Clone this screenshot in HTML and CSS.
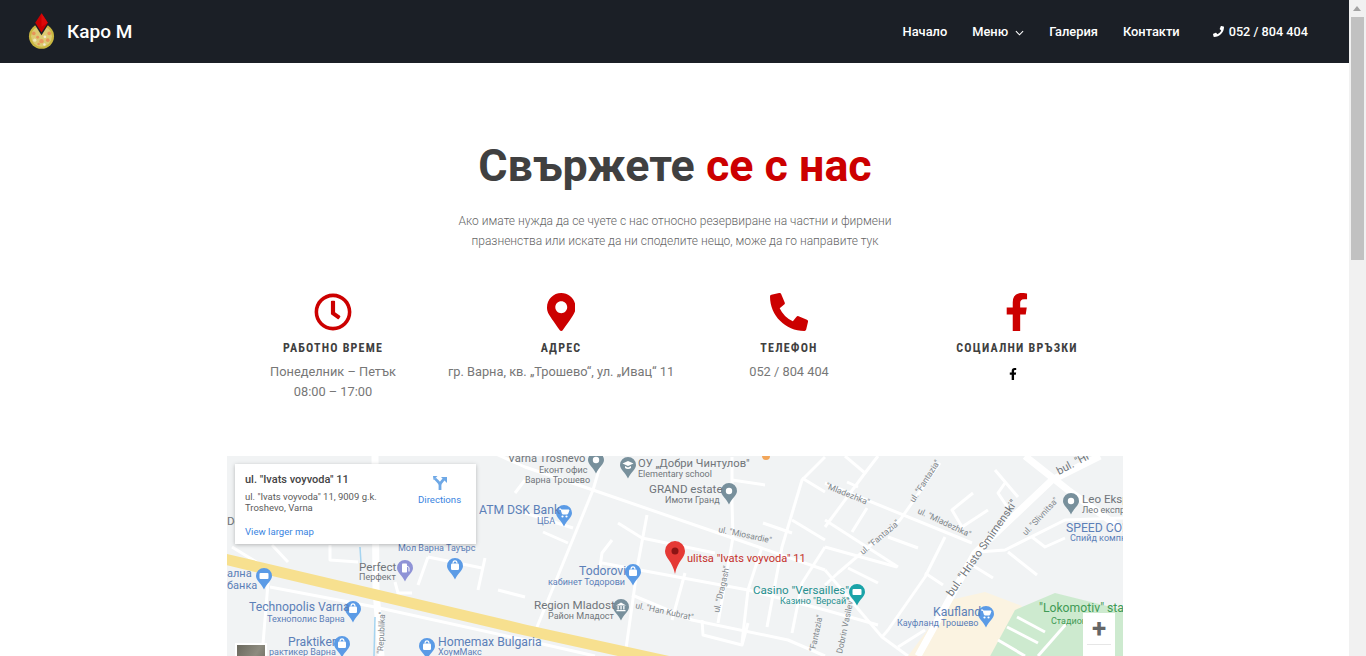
FILE: index.html
```html
<!DOCTYPE html>
<html lang="bg">
<head>
    <meta charset="UTF-8">
    <meta name="viewport" content="width=device-width, initial-scale=1.0">
    <title>Контакти - Каро М</title>
    <link rel="stylesheet" href="styles.css">
</head>
<body>
    <div class="page">
        <!-- Navigation -->
        <nav class="navbar">
            <a href="#" class="brand">
                <svg class="brand-logo" viewBox="0 0 28 38" aria-hidden="true">
                    <circle cx="14" cy="24" r="13" fill="#c9b640"/>
                    <circle cx="14" cy="24" r="10.800" fill="#dccb72"/>
                    <circle cx="6" cy="21" r="1.900" fill="#e6955a"/>
                    <circle cx="22" cy="21" r="1.900" fill="#e6955a"/>
                    <circle cx="14" cy="29" r="2.300" fill="#e8985e"/>
                    <circle cx="7" cy="28" r="1.700" fill="#f1e6b8"/>
                    <circle cx="20.500" cy="28" r="1.900" fill="#e6955a"/>
                    <circle cx="10" cy="25" r="1.500" fill="#e6955a"/>
                    <circle cx="17.500" cy="24.500" r="1.400" fill="#f3ead0"/>
                    <circle cx="11" cy="32" r="1.300" fill="#e6955a"/>
                    <circle cx="17" cy="32.500" r="1.300" fill="#f3ead0"/>
                    <path d="M14 23 L6.500 11 H21.500 Z" fill="#1b1f26"/>
                    <path d="M14 0 L20.500 10 L14 20 L7.500 10 Z" fill="#c80000"/>
                    <path d="M14 0 L20.500 10 L14 14 Z" fill="#dc0a0a"/>
                </svg>
                <span>Каро М</span>
            </a>
            <ul class="nav-links">
                <li><a href="#">Начало</a></li>
                <li>
                    <a href="#" class="has-caret">Меню
                        <svg class="caret" viewBox="0 0 10 6" aria-hidden="true"><path d="M1 1l4 4 4-4" fill="none" stroke="currentColor" stroke-width="1.200"/></svg>
                    </a>
                </li>
                <li><a href="#">Галерия</a></li>
                <li><a href="#">Контакти</a></li>
            </ul>
            <a href="#" class="nav-phone">
                <svg class="nav-phone-icon" viewBox="0 0 512 512" aria-hidden="true"><path d="M493.4 24.600l-104-24c-11.300-2.600-22.900 3.300-27.500 13.900l-48 112c-4.200 9.800-1.400 21.300 6.900 28l60.600 49.600c-36 76.700-98.900 140.500-177.200 177.200l-49.600-60.600c-6.800-8.300-18.200-11.100-28-6.900l-112 48C3.900 366.500-2 378.100.6 389.400l24 104C27.100 504.200 36.700 512 48 512c256.100 0 464-207.500 464-464 0-11.200-7.700-20.900-18.600-23.400z"/></svg>
                052 / 804 404
            </a>
        </nav>

        <!-- Main Content -->
        <main class="contact">
            <h1 class="contact-title">Свържете <span>се с нас</span></h1>
            <p class="contact-lead">Ако имате нужда да се чуете с нас относно резервиране на частни и фирмени<br>празненства или искате да ни споделите нещо, може да го направите тук</p>

            <div class="info-grid">
                <div class="info-col">
                    <svg class="info-icon" viewBox="0 0 512 512" aria-hidden="true"><path d="M256 8C119 8 8 119 8 256s111 248 248 248 248-111 248-248S393 8 256 8zm0 448c-110.500 0-200-89.500-200-200S145.500 56 256 56s200 89.500 200 200-89.500 200-200 200zm61.800-104.400l-84.900-61.700c-3.100-2.300-4.900-5.900-4.900-9.700V116c0-6.600 5.400-12 12-12h32c6.600 0 12 5.400 12 12v141.700l66.800 48.600c5.400 3.900 6.500 11.400 2.600 16.800L334.600 349c-3.900 5.300-11.400 6.500-16.800 2.600z"/></svg>
                    <h3>Работно време</h3>
                    <p>Понеделник – Петък<br>08:00 – 17:00</p>
                </div>
                <div class="info-col">
                    <svg class="info-icon" viewBox="0 0 384 512" aria-hidden="true"><path d="M172.268 501.670C26.970 291.031 0 269.413 0 192 0 85.961 85.961 0 192 0s192 85.961 192 192c0 77.413-26.970 99.031-172.268 309.670-9.535 13.774-29.930 13.773-39.464 0zM192 272c44.183 0 80-35.817 80-80s-35.817-80-80-80-80 35.817-80 80 35.817 80 80 80z"/></svg>
                    <h3>Адрес</h3>
                    <p>гр. Варна, кв. „Трошево“, ул. „Ивац“ 11</p>
                </div>
                <div class="info-col">
                    <svg class="info-icon" viewBox="0 0 512 512" aria-hidden="true"><path d="M497.390 361.800l-112-48a24 24 0 0 0-28 6.900l-49.600 60.600A370.660 370.660 0 0 1 130.600 204.110l60.600-49.600a23.940 23.940 0 0 0 6.900-28l-48-112A24.160 24.160 0 0 0 122.600.61l-104 24A24 24 0 0 0 0 48c0 256.500 207.900 464 464 464a24 24 0 0 0 23.400-18.600l24-104a24.290 24.290 0 0 0-14.010-27.600z"/></svg>
                    <h3>Телефон</h3>
                    <p>052 / 804 404</p>
                </div>
                <div class="info-col">
                    <svg class="info-icon" viewBox="0 0 320 512" aria-hidden="true"><path d="M279.140 288l14.220-92.660h-88.910v-60.130c0-25.350 12.420-50.060 52.240-50.060h40.420V6.260S260.430 0 225.360 0c-73.220 0-121.080 44.380-121.080 124.720v70.620H22.890V288h81.390v224h100.170V288z"/></svg>
                    <h3>Социални връзки</h3>
                    <a href="#" class="social-link">
                        <svg viewBox="0 0 320 512" aria-hidden="true"><path d="M279.140 288l14.220-92.660h-88.910v-60.130c0-25.350 12.420-50.060 52.240-50.060h40.420V6.260S260.430 0 225.360 0c-73.220 0-121.080 44.380-121.080 124.720v70.620H22.890V288h81.390v224h100.170V288z"/></svg>
                    </a>
                </div>
            </div>

            <!-- Map -->
            <div class="map">
                <svg class="map-canvas" viewBox="227 456 896 450" aria-label="Карта">
                    <defs>
                        <g id="pin">
                            <path d="M0-8a8 8 0 0 1 8 8c0 4.500-5 7-8 13.500C-3 7-8 4.500-8 0a8 8 0 0 1 8-8z"/>
                        </g>
                        <g id="pin-bag">
                            <use href="#pin"/>
                            <rect x="-4" y="-2.500" width="8" height="6.500" rx="1.200" fill="#fff"/>
                            <path d="M-2-2.500c0-3.500 4-3.500 4 0" fill="none" stroke="#fff" stroke-width="1.100"/>
                        </g>
                        <g id="pin-dot">
                            <use href="#pin"/>
                            <circle r="3.200" fill="#fff"/>
                        </g>
                        <g id="pin-cart">
                            <use href="#pin"/>
                            <path d="M-5-4h2l1.500 5h5l1.500-4h-7" fill="#fff" stroke="#fff" stroke-width="1"/>
                            <circle cx="-1.500" cy="3.500" r="1.100" fill="#fff"/>
                            <circle cx="2.500" cy="3.500" r="1.100" fill="#fff"/>
                        </g>
                        <g id="pin-bank">
                            <use href="#pin"/>
                            <path d="M-5-1.500L0-4.500l5 3zM-4.500 3h9v1.300h-9zM-3.500-1h1.300v3.500h-1.300zM-.6-1H.7v3.500H-.6zM2.200-1h1.300v3.500H2.200z" fill="#fff"/>
                        </g>
                        <g id="pin-fuel">
                            <use href="#pin"/>
                            <rect x="-3" y="-4.500" width="5" height="9" rx=".8" fill="#fff"/>
                            <path d="M2-2l2 1.500v4" fill="none" stroke="#fff" stroke-width="1"/>
                        </g>
                        <g id="pin-school">
                            <use href="#pin"/>
                            <path d="M-5.500-1.500L0-4l5.500 2.500L0 1zM-3 1v2c1.500 1.300 4.500 1.300 6 0V1L0 2.400z" fill="#fff"/>
                        </g>
                        <g id="pin-card">
                            <use href="#pin"/>
                            <rect x="-4.500" y="-3" width="9" height="6" rx="1" fill="#fff"/>
                        </g>
                    </defs>

                    <rect x="227" y="456" width="896" height="450" fill="#f1f3f4"/>
                    <path class="area-beige" d="M985 592L1022 606 990 660H905L950 600Z"/>
                    <path class="area-green" d="M1055 593L1123 610V660H988L1015 610Z"/>

                    <g class="roads-thin">
                        <polyline points="330,545 330,560 358,562"/>
                        <polyline points="428,557 482,568"/>
                        <polyline points="428,557 418,585"/>
                        <polyline points="485,558 478,590"/>
                        <polyline points="395,582 398,593 412,593"/>
                        <polyline points="268,583 262,656"/>
                        <polyline points="270,587 375,607 525,640 595,656"/>
                        <polyline points="232,547 258,563"/>
                        <polyline points="272,545 288,562"/>
                        <polyline points="498,590 525,597"/>
                        <polyline points="515,493 525,480"/>
                        <polyline points="603,456 593,490 537,627"/>
                        <polyline points="476,445 525,467 593,490 718,533 825,570"/>
                        <polyline points="647,515 638,563 625,656"/>
                        <polyline points="618,523 642,538 715,553"/>
                        <polyline points="602,563 748,590 825,610 878,625"/>
                        <polyline points="612,540 602,553 600,567"/>
                        <polyline points="685,573 672,620"/>
                        <polyline points="632,595 692,620 788,640 825,656"/>
                        <polyline points="702,620 703,635 742,645 748,623"/>
                        <polyline points="732,457 732,503 733,537 718,623"/>
                        <polyline points="762,547 748,590 742,643"/>
                        <polyline points="825,457 802,480 782,547 767,627"/>
                        <polyline points="825,547 802,583 792,633"/>
                        <polyline points="732,480 765,485"/>
                        <polyline points="763,523 792,533"/>
                        <polyline points="543,532 568,543"/>
                        <polyline points="525,513 573,528"/>
                        <polyline points="792,520 825,540"/>
                        <polyline points="802,478 825,492"/>
                        <polyline points="845,456 865,473 825,527"/>
                        <polyline points="878,456 865,473"/>
                        <polyline points="940,463 900,520 838,573 825,585"/>
                        <polyline points="825,483 972,543"/>
                        <polyline points="867,508 852,532"/>
                        <polyline points="847,482 858,487"/>
                        <polyline points="825,520 898,567"/>
                        <polyline points="825,547 897,567"/>
                        <polyline points="888,537 918,548"/>
                        <polyline points="848,568 878,583"/>
                        <polyline points="825,570 882,637 908,656"/>
                        <polyline points="945,537 925,577 888,630 882,637"/>
                        <polyline points="925,573 943,585"/>
                        <polyline points="972,565 993,578"/>
                        <polyline points="1008,552 1037,575"/>
                        <polyline points="978,552 1005,550 1065,520 1123,518"/>
                        <polyline points="1032,537 1045,547 1065,538"/>
                        <polyline points="995,470 1018,497"/>
                        <polyline points="1005,483 998,493 1008,508"/>
                        <polyline points="973,493 952,510 962,527 988,510"/>
                        <polyline points="898,647 925,630"/>
                        <polyline points="1017,617 1045,632"/>
                        <polyline points="1007,627 1038,643"/>
                        <polyline points="998,640 1025,656"/>
                        <polyline points="1067,623 1038,656"/>
                    </g>
                    <g class="roads-main">
                        <polyline points="375,456 376,590 381,656"/>
                        <polyline points="918,656 975,553 1052,480 1100,456"/>
                        <polyline points="1025,456 1068,490 1123,530"/>
                    </g>
                    <g class="streams">
                        <polyline points="360,547 361,563"/>
                        <polyline points="375,617 374,656"/>
                    </g>
                    <polyline class="road-highway" points="220,558 525,630 680,664"/>

                    <g class="pins-blue">
                        <use href="#pin-bag" x="455" y="566"/>
                        <use href="#pin-card" x="264" y="576"/>
                        <use href="#pin-bag" x="353" y="609"/>
                        <use href="#pin-bag" x="342" y="644"/>
                        <use href="#pin-bag" x="427" y="646"/>
                        <use href="#pin-cart" x="564" y="513"/>
                        <use href="#pin-bag" x="633" y="572"/>
                        <use href="#pin-cart" x="986" y="614"/>
                        <use href="#pin-dot" x="938" y="664"/>
                    </g>
                    <use class="pin-violet" href="#pin-fuel" x="405" y="568"/>
                    <g class="pins-slate">
                        <use href="#pin-dot" x="596" y="460"/>
                        <use href="#pin-school" x="628" y="465"/>
                        <use href="#pin-dot" x="729" y="491"/>
                        <use href="#pin-bank" x="621" y="607"/>
                        <use href="#pin-dot" x="1071" y="501"/>
                    </g>
                    <use class="pin-teal" href="#pin-card" x="857" y="592"/>
                    <circle cx="766" cy="456" r="4" fill="#f2a65a"/>

                    <g class="labels-street">
                        <text transform="translate(718 532) rotate(12)">ul. "Miosardie"</text>
                        <text transform="translate(635 608) rotate(12)">ul. "Han Kubrat"</text>
                        <text transform="translate(719 613) rotate(-77)">ul. "Dragash"</text>
                        <text transform="translate(914 503) rotate(-57)">ul. "Fantazia"</text>
                        <text transform="translate(863 555) rotate(-40)">ul. "Fantazia"</text>
                        <text transform="translate(815 652) rotate(-78)">"Fantazia"</text>
                        <text transform="translate(825 488) rotate(22)">"Mladezhka"</text>
                        <text transform="translate(917 513) rotate(25)">ul. "Mladezhka"</text>
                        <text transform="translate(1026 536) rotate(-47)">ul. "Slivnitsa"</text>
                        <text transform="translate(842 654) rotate(-78)">Dobrin Vasilev"</text>
                        <text transform="translate(383 654) rotate(-87)">"Republika"</text>
                        <text class="label-blvd" transform="translate(952 597) rotate(-55)">bul. "Hristo Smirnenski"</text>
                        <text class="label-blvd" transform="translate(1059 475) rotate(-28)">bul. "Hr</text>
                    </g>

                    <g class="labels-blue">
                        <text x="398" y="551" class="label-sm">Мол Варна Тауърс</text>
                        <text x="227" y="577" class="label-md">ална</text>
                        <text x="227" y="589" class="label-md">банка</text>
                        <text x="249" y="611">Technopolis Varna</text>
                        <text x="267" y="622" class="label-sm">Технополис Варна</text>
                        <text x="288" y="646">Praktiker</text>
                        <text x="269" y="655" class="label-sm">рактикер Варна</text>
                        <text x="438" y="646">Homemax Bulgaria</text>
                        <text x="438" y="655" class="label-sm">ХоумМакс</text>
                        <text x="479" y="514">ATM DSK Bank</text>
                        <text x="537" y="524" class="label-sm">ЦБА</text>
                        <text x="579" y="575">Todorovi</text>
                        <text x="548" y="585" class="label-sm">кабинет Тодорови</text>
                        <text x="1066" y="532">SPEED COM</text>
                        <text x="1070" y="541" class="label-sm">Спийд компю</text>
                        <text x="933" y="616">Kaufland</text>
                        <text x="897" y="626" class="label-sm">Кауфланд Трошево</text>
                    </g>
                    <g class="labels-grey">
                        <text x="227" y="525">De</text>
                        <text x="359" y="571">Perfect</text>
                        <text x="359" y="580" class="label-sm">Перфект</text>
                        <text x="508" y="462" class="label-tight">Varna Troshevo</text>
                        <text x="539" y="473" class="label-sm">Еконт офис</text>
                        <text x="525" y="483" class="label-sm">Варна Трошево</text>
                        <text x="638" y="467" class="label-tight">ОУ „Добри Чинтулов"</text>
                        <text x="638" y="477" class="label-sm">Elementary school</text>
                        <text x="649" y="493">GRAND estate</text>
                        <text x="665" y="503" class="label-sm">Имоти Гранд</text>
                        <text x="534" y="609">Region Mladost</text>
                        <text x="548" y="619" class="label-sm">Район Младост</text>
                        <text x="1082" y="503">Leo Eksp</text>
                        <text x="1082" y="513" class="label-sm">Лео експр</text>
                    </g>
                    <g class="labels-teal">
                        <text x="753" y="594">Casino "Versailles"</text>
                        <text x="780" y="604" class="label-sm">Казино "Версай"</text>
                    </g>
                    <g class="labels-green">
                        <text x="1039" y="612">"Lokomotiv" stad</text>
                        <text x="1051" y="624" class="label-sm">Стадион</text>
                    </g>

                    <text class="label-marker" x="687" y="562">ulitsa "Ivats voyvoda" 11</text>
                    <path d="M675 541a10 10 0 0 1 10 10c0 7-7.500 10-10 23-2.500-13-10-16-10-23a10 10 0 0 1 10-10z" fill="#e53935"/>
                    <circle cx="675" cy="551" r="3.500" fill="#8c1414"/>
                </svg>

                <div class="map-card">
                    <div class="map-card-text">
                        <div class="map-card-title">ul. "Ivats voyvoda" 11</div>
                        <div class="map-card-address">ul. "Ivats voyvoda" 11, 9009 g.k. Troshevo, Varna</div>
                        <a href="#" class="map-card-link">View larger map</a>
                    </div>
                    <a href="#" class="map-directions">
                        <svg viewBox="0 0 16 16" aria-hidden="true"><path d="M8 15V10C8 7.500 5 6 3 3.500M8 10C8 7.500 10 6.500 12 4" fill="none" stroke="#6ea8e6" stroke-width="2.800"/><path d="M9 2h6v6z" fill="#6ea8e6"/><path d="M1 1h4.500L1.500 5z" fill="#6ea8e6"/></svg>
                        <span>Directions</span>
                    </a>
                </div>

                <div class="map-zoom">
                    <span class="map-zoom-plus">+</span>
                    <span class="map-zoom-line"></span>
                </div>

                <div class="map-thumb"></div>
            </div>
        </main>
    </div>

    <!-- Scrollbar -->
    <div class="scrollbar">
        <span class="scrollbar-arrow"></span>
        <span class="scrollbar-thumb"></span>
    </div>
</body>
</html>
```

FILE: styles.css
```css
/* Global Styles */
html, body {
    margin: 0;
    padding: 0;
    height: 656px;
    overflow: hidden;
}

body {
    display: flex;
    font-family: Roboto, "Liberation Sans", sans-serif;
    background-color: #fff;
    color: #777;
}

a {
    color: inherit;
    text-decoration: none;
}

.page {
    flex: 1;
    min-width: 0;
}

/* Navigation */
.navbar {
    display: flex;
    align-items: center;
    height: 63px;
    padding: 0 41px 0 28px;
    background: #1b1f26;
    color: #fff;
}

.brand {
    display: flex;
    align-items: center;
    gap: 12px;
    font-size: 19px;
    font-weight: 500;
    margin-right: auto;
}

.brand-logo {
    width: 27px;
    height: 37px;
}

.nav-links {
    display: flex;
    gap: 25px;
    list-style: none;
    margin: 0 33px 0 0;
    padding: 0;
    font-size: 12.85px;
    font-weight: 500;
}

.has-caret {
    display: flex;
    align-items: center;
    gap: 7px;
}

.caret {
    width: 9px;
    height: 6px;
    margin-top: 2px;
}

.nav-phone {
    display: flex;
    align-items: center;
    gap: 5px;
    font-size: 12.7px;
    font-weight: 500;
}

.nav-phone-icon {
    width: 11px;
    height: 11px;
    fill: #fff;
}

/* Contact */
.contact {
    width: 912px;
    margin: 0 0 0 219px;
    text-align: center;
}

.contact-title {
    margin: 75px 0 0;
    font-size: 44.8px;
    line-height: 56px;
    font-weight: 700;
    color: #404040;
}

.contact-title span {
    color: #cc0000;
}

.contact-lead {
    margin: 17px 0 0;
    font-size: 12px;
    line-height: 20px;
    font-weight: 300;
    color: #666;
}

.info-grid {
    display: grid;
    grid-template-columns: repeat(4, 1fr);
    margin-top: 42px;
}

.info-icon {
    display: block;
    height: 38px;
    margin: 0 auto;
    fill: #cc0000;
}

.info-col h3 {
    margin: 9px 0 0;
    font-size: 12px;
    line-height: 16px;
    font-weight: 700;
    font-stretch: 80%;
    letter-spacing: 1.2px;
    text-transform: uppercase;
    color: #404040;
}

.info-col p {
    margin: 6px 0 0;
    font-size: 12.8px;
    line-height: 20px;
    white-space: nowrap;
}

.social-link {
    display: block;
    margin: 12px 0 0 -8px;
}

.social-link svg {
    display: block;
    width: 12px;
    height: 12px;
    margin: 0 auto;
    fill: #000;
}

/* Map */
.map {
    position: relative;
    height: 450px;
    margin: 54px 8px 0;
    overflow: hidden;
    text-align: left;
}

.map-canvas {
    display: block;
    width: 100%;
    height: 100%;
}

.area-beige {
    fill: #fbf3e1;
}

.area-green {
    fill: #cdeacf;
}

.roads-thin polyline {
    fill: none;
    stroke: #fff;
    stroke-width: 3;
    stroke-linejoin: round;
}

.roads-main polyline {
    fill: none;
    stroke: #fff;
    stroke-width: 7;
    stroke-linejoin: round;
}

.streams polyline {
    fill: none;
    stroke: #a5d4f0;
    stroke-width: 1.5;
}

.road-highway {
    fill: none;
    stroke: #f7e08f;
    stroke-width: 11;
}

.pins-blue {
    fill: #5b9be6;
}

.pins-slate {
    fill: #78909c;
}

.pin-violet {
    fill: #8f93d6;
}

.pin-teal {
    fill: #1aa3a8;
}

.labels-blue text,
.labels-green text {
    font-size: 12.2px;
}

.labels-grey text,
.labels-teal text {
    font-size: 11.6px;
}

.labels-blue text {
    fill: #5c80b8;
}

.labels-grey text {
    fill: #70757a;
}

.labels-teal text {
    fill: #26908f;
}

.labels-green text {
    fill: #3f9a55;
}

.labels-blue .label-sm,
.labels-grey .label-sm,
.labels-teal .label-sm,
.labels-green .label-sm {
    font-size: 9px;
}

.labels-blue .label-md {
    font-size: 11px;
}

.labels-grey .label-tight {
    font-size: 11.2px;
}

.labels-street text {
    font-size: 8.5px;
    fill: #80868b;
}

.labels-street .label-blvd {
    font-size: 11px;
    fill: #70757a;
}

.label-marker {
    font-size: 11.1px;
    fill: #c5312b;
}

.map-card {
    position: absolute;
    top: 8px;
    left: 8px;
    display: flex;
    box-sizing: border-box;
    width: 241px;
    height: 80px;
    padding: 9px 10px;
    background: #fff;
    box-shadow: 0 1px 4px rgba(0, 0, 0, 0.25);
}

.map-card-text {
    width: 150px;
}

.map-card-title {
    font-size: 11px;
    line-height: 13px;
    font-weight: 500;
    color: #444;
}

.map-card-address {
    margin-top: 5px;
    font-size: 9.5px;
    line-height: 11px;
    color: #5b5b5b;
}

.map-card-link {
    display: block;
    margin-top: 13px;
    font-size: 9.6px;
    line-height: 12px;
    color: #3a84df;
}

.map-directions {
    display: flex;
    flex-direction: column;
    align-items: center;
    height: 33px;
    margin: 2px 0 0 23px;
    font-size: 9.6px;
    line-height: 12px;
    color: #3a84df;
}

.map-directions svg {
    width: 16px;
    height: 16px;
    margin-bottom: 3px;
}

.map-zoom {
    position: absolute;
    top: 157px;
    right: 8px;
    width: 32px;
    height: 60px;
    background: #fff;
    text-align: center;
}

.map-zoom-plus {
    display: block;
    height: 31px;
    font-size: 26px;
    line-height: 30px;
    font-weight: 700;
    color: #666;
}

.map-zoom-line {
    display: block;
    height: 1px;
    margin: 0 4px;
    background: #e6e6e6;
}

.map-thumb {
    position: absolute;
    top: 187px;
    left: 8px;
    width: 32px;
    height: 32px;
    border: 2px solid #fff;
    box-sizing: border-box;
    background: linear-gradient(120deg, #6b695e, #8d8b7f 55%, #66665c);
}

/* Scrollbar */
.scrollbar {
    position: relative;
    flex: 0 0 17px;
    background: #f1f1f1;
}

.scrollbar-arrow {
    position: absolute;
    top: 6px;
    left: 4px;
    border-left: 4px solid transparent;
    border-right: 4px solid transparent;
    border-bottom: 5px solid #a3a3a3;
}

.scrollbar-thumb {
    position: absolute;
    top: 17px;
    left: 2px;
    width: 13px;
    height: 243px;
    background: #c1c1c1;
}
```
